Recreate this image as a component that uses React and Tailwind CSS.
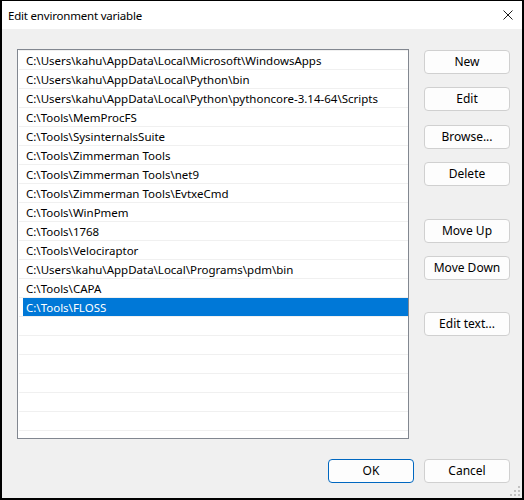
import React from "react";

const paths = [
  "C:\\Users\\kahu\\AppData\\Local\\Microsoft\\WindowsApps",
  "C:\\Users\\kahu\\AppData\\Local\\Python\\bin",
  "C:\\Users\\kahu\\AppData\\Local\\Python\\pythoncore-3.14-64\\Scripts",
  "C:\\Tools\\MemProcFS",
  "C:\\Tools\\SysinternalsSuite",
  "C:\\Tools\\Zimmerman Tools",
  "C:\\Tools\\Zimmerman Tools\\net9",
  "C:\\Tools\\Zimmerman Tools\\EvtxeCmd",
  "C:\\Tools\\WinPmem",
  "C:\\Tools\\1768",
  "C:\\Tools\\Velociraptor",
  "C:\\Users\\kahu\\AppData\\Local\\Programs\\pdm\\bin",
  "C:\\Tools\\CAPA",
  "C:\\Tools\\FLOSS",
];

const selected = 13;
const totalRows = 21;

function Button({ children, className = "", primary = false }) {
  return (
    <button
      className={
        "w-[86px] h-[24px] rounded-[4px] bg-[#fdfdfd] text-[12px] text-black leading-none flex items-center justify-center " +
        (primary ? "border border-[#0067c0] " : "border border-[#d0d0d0] ") +
        className
      }
    >
      {children}
    </button>
  );
}

function ResizeGrip() {
  const dots = [
    [8, 0],
    [4, 4],
    [8, 4],
    [0, 8],
    [4, 8],
    [8, 8],
  ];
  return (
    <svg width="10" height="10" className="absolute right-[2px] bottom-[2px]">
      {dots.map(([x, y], i) => (
        <rect key={i} x={x} y={y} width="2" height="2" fill="#c2c2c2" />
      ))}
    </svg>
  );
}

export default function App() {
  const rows = [];
  for (let i = 0; i < totalRows; i++) {
    const text = paths[i];
    rows.push(
      <div key={i} className="h-[19px] shrink-0 border-t border-[#f0f0f0] flex">
        {text !== undefined && (
          <div
            className={
              "ml-[4px] flex-1 h-[18px] pl-[3px] pt-[2px] flex items-center whitespace-nowrap " +
              (i === selected ? "bg-[#0078d7] text-white" : "text-black")
            }
          >
            {text}
          </div>
        )}
      </div>
    );
  }

  return (
    <div
      className="w-[524px] h-[500px] bg-black pt-[1px] pl-[2px] pr-[2px] pb-[2px] flex flex-col"
      style={{ fontFamily: '"Noto Sans", "Segoe UI", sans-serif' }}
    >
      {/* title bar */}
      <div className="h-[28px] bg-white flex items-center justify-between shrink-0">
        <span className="pl-[6px] pt-[1px] text-[11.5px] tracking-[-0.2px] text-black">Edit environment variable</span>
        <svg width="10" height="10" viewBox="0 0 10 10" className="mr-[9px]">
          <path d="M0.5 0.5 L9.5 9.5 M9.5 0.5 L0.5 9.5" stroke="#1a1a1a" strokeWidth="1" />
        </svg>
      </div>

      {/* dialog body */}
      <div className="relative flex-1 bg-[#f0f0f0] pt-[20px] pl-[15px] pr-[12px] flex flex-col">
        <div className="flex">
          <div className="w-[392px] h-[390px] border border-[#828790] bg-white pl-[1px] text-[11.5px] flex flex-col overflow-hidden">
            {rows}
          </div>

          <div className="ml-[15px] pt-[1px] flex flex-col">
            <Button>New</Button>
            <Button className="mt-[13px]">Edit</Button>
            <Button className="mt-[14px]">Browse...</Button>
            <Button className="mt-[13px]">Delete</Button>
            <Button className="mt-[33px]">Move Up</Button>
            <Button className="mt-[13px]">Move Down</Button>
            <Button className="mt-[32px]">Edit text...</Button>
          </div>
        </div>

        <div className="mt-[20px] flex justify-end gap-[10px]">
          <Button primary>OK</Button>
          <Button>Cancel</Button>
        </div>

        <ResizeGrip />
      </div>
    </div>
  );
}
